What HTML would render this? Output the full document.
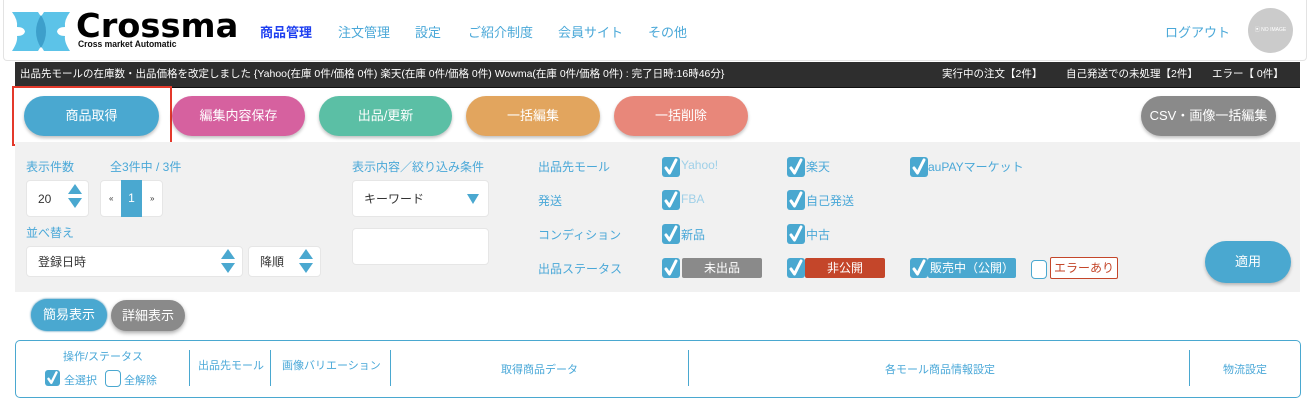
<!DOCTYPE html>
<html><head><meta charset="utf-8"><style>
*{box-sizing:border-box;margin:0;padding:0}
body{width:1307px;height:404px;overflow:hidden;background:#fff;font-family:"Liberation Sans","Noto Sans CJK JP",sans-serif;position:relative}
.a{position:absolute}
.nav{position:absolute;top:22px;font-size:13px;color:#4aa8d8}
.btn{position:absolute;top:96px;height:40px;border-radius:20px;color:#fff;font-size:13px;text-align:center;line-height:40px;box-shadow:0 2px 3px rgba(0,0,0,.25)}
.lbl{position:absolute;font-size:12px;color:#4aa8d8}
.box{position:absolute;background:#fff;border-radius:4px;border:1px solid #e6e6e6;font-size:12px;color:#333}
.up{position:absolute;width:0;height:0;border-left:7px solid transparent;border-right:7px solid transparent;border-bottom:10px solid #4aa8d0}
.dn{position:absolute;width:0;height:0;border-left:7px solid transparent;border-right:7px solid transparent;border-top:10px solid #4aa8d0}
.cb{position:absolute;width:18px;height:20px;background:#4aa8d0;border-radius:3px}
.cb svg{position:absolute;left:0;top:0;width:100%;height:100%}
.ct{position:absolute;font-size:12px;color:#4aa8d8}
.bd{position:absolute;height:20px;color:#fff;font-size:12px;line-height:20px;text-align:center;border-radius:2px}
.th{position:absolute;font-size:11px;color:#4aa8d8}
.sep{position:absolute;top:350px;width:1px;height:36px;background:#4aa8d0}
</style></head><body>
<svg width="0" height="0" style="position:absolute"><defs><symbol id="ck" viewBox="0 0 18 20"><path d="M4 11 L7.5 16 L14 3" stroke="#fff" stroke-width="3" fill="none" stroke-linecap="round" stroke-linejoin="round"/></symbol></defs></svg>
<div class="a" style="left:3px;top:0;width:1304px;height:61px;border:1px solid #e3e3e3;border-top:none;border-radius:0 0 4px 4px"></div>
<svg class="a" style="left:12px;top:10px" width="60" height="43" viewBox="0 0 60 43">
<path d="M0 2 L26 2 Q40 21 26 41 L0 41 Q6 32 5 26 Q12 26 13 21.5 Q12 17 5 17 Q6 10 0 2Z" fill="#5cc3e8"/>
<path d="M58 2 L32 2 Q18 21 32 41 L58 41 Q52 32 53 26 Q46 26 45 21.5 Q46 17 53 17 Q52 10 58 2Z" fill="#5cc3e8"/>
<path d="M29 5 Q19 21.5 29 38 Q39 21.5 29 5Z" fill="#3d9fcb"/>
</svg>
<div class="a" style="left:76px;top:6px;font-size:33px;font-weight:900;color:#000;letter-spacing:0px;font-family:'DejaVu Sans','Liberation Sans',sans-serif;transform:scaleX(1.02);transform-origin:left">Crossma</div>
<div class="a" style="left:78px;top:39px;font-size:9px;font-weight:bold;color:#111;transform:scaleX(.95);transform-origin:left">Cross market Automatic</div>
<div class="nav" style="left:260px;color:#1e3ff0;font-weight:bold">商品管理</div>
<div class="nav" style="left:338px">注文管理</div>
<div class="nav" style="left:415px">設定</div>
<div class="nav" style="left:468px">ご紹介制度</div>
<div class="nav" style="left:558px">会員サイト</div>
<div class="nav" style="left:648px">その他</div>
<div class="nav" style="left:1165px">ログアウト</div>
<div class="a" style="left:1248px;top:8px;width:45px;height:45px;border-radius:50%;background:#cbcbcb;color:#fff;font-size:5px;line-height:45px;text-align:center">▣ NO IMAGE</div>
<div class="a" style="left:15px;top:62px;width:1285px;height:26px;background:#2e2e2e;color:#fff;font-size:10.5px;line-height:25px;padding-left:5px;border-bottom:1px solid #111">出品先モールの在庫数・出品価格を改定しました {Yahoo(在庫 0件/価格 0件) 楽天(在庫 0件/価格 0件) Wowma(在庫 0件/価格 0件) : 完了日時:16時46分}
<span class="a" style="left:927px;top:0">実行中の注文【2件】</span><span class="a" style="left:1051px;top:0">自己発送での未処理【2件】</span><span class="a" style="left:1197px;top:0">エラー【 0件】</span></div>
<div class="a" style="left:12px;top:86px;width:160px;height:60px;border:2px solid #e4392b"></div>
<div class="btn" style="left:24px;width:135px;background:#4aa8d0">商品取得</div>
<div class="btn" style="left:172px;width:133px;background:#d6619f">編集内容保存</div>
<div class="btn" style="left:319px;width:133px;background:#5bbfa5">出品/更新</div>
<div class="btn" style="left:466px;width:134px;background:#e2a55e">一括編集</div>
<div class="btn" style="left:614px;width:134px;background:#e8877a">一括削除</div>
<div class="btn" style="left:1141px;width:135px;background:#8a8a8a">CSV・画像一括編集</div>
<div class="a" style="left:15px;top:142px;width:1285px;height:150px;background:#f1f1f1"></div>
<div class="lbl" style="left:26px;top:158px">表示件数</div>
<div class="lbl" style="left:110px;top:158px">全3件中 / 3件</div>
<div class="box" style="left:26px;top:180px;width:63px;height:37px;line-height:36px;padding-left:11px">20</div>
<div class="up" style="left:68px;top:184px"></div><div class="dn" style="left:68px;top:198px"></div>
<div class="box" style="left:100px;top:180px;width:63px;height:37px;font-size:8px;line-height:36px"><span class="a" style="left:8px">«</span><span class="a" style="left:20px;top:-1px;width:21px;height:37px;background:#4aa8d0;color:#fff;font-size:12px;text-align:center">1</span><span class="a" style="left:49px">»</span></div>
<div class="lbl" style="left:26px;top:224px">並べ替え</div>
<div class="box" style="left:26px;top:246px;width:217px;height:31px;line-height:30px;padding-left:11px">登録日時</div>
<div class="up" style="left:221px;top:249px"></div><div class="dn" style="left:221px;top:263px"></div>
<div class="box" style="left:248px;top:246px;width:73px;height:31px;line-height:30px;padding-left:11px">降順</div>
<div class="up" style="left:299px;top:249px"></div><div class="dn" style="left:299px;top:263px"></div>
<div class="lbl" style="left:352px;top:158px">表示内容／絞り込み条件</div>
<div class="box" style="left:352px;top:180px;width:137px;height:37px;line-height:36px;padding-left:11px">キーワード</div>
<div class="dn" style="left:467px;top:194px;border-left-width:6px;border-right-width:6px"></div>
<div class="box" style="left:352px;top:228px;width:137px;height:37px"></div>
<div class="lbl" style="left:538px;top:158px">出品先モール</div>
<div class="lbl" style="left:538px;top:192px">発送</div>
<div class="lbl" style="left:538px;top:226px">コンディション</div>
<div class="lbl" style="left:538px;top:260px">出品ステータス</div>
<div class="cb" style="left:662px;top:157px"><svg><use href="#ck"/></svg></div><div class="ct" style="left:681px;top:158px;color:#9fd0e8">Yahoo!</div>
<div class="cb" style="left:787px;top:157px"><svg><use href="#ck"/></svg></div><div class="ct" style="left:806px;top:158px">楽天</div>
<div class="cb" style="left:910px;top:157px"><svg><use href="#ck"/></svg></div><div class="ct" style="left:928px;top:158px">auPAYマーケット</div>
<div class="cb" style="left:662px;top:190px"><svg><use href="#ck"/></svg></div><div class="ct" style="left:681px;top:192px;color:#9fd0e8">FBA</div>
<div class="cb" style="left:787px;top:190px"><svg><use href="#ck"/></svg></div><div class="ct" style="left:806px;top:192px">自己発送</div>
<div class="cb" style="left:662px;top:224px"><svg><use href="#ck"/></svg></div><div class="ct" style="left:681px;top:226px">新品</div>
<div class="cb" style="left:787px;top:224px"><svg><use href="#ck"/></svg></div><div class="ct" style="left:806px;top:226px">中古</div>
<div class="cb" style="left:662px;top:258px"><svg><use href="#ck"/></svg></div><div class="bd" style="left:682px;top:258px;width:80px;background:#8a8a8a">未出品</div>
<div class="cb" style="left:787px;top:258px"><svg><use href="#ck"/></svg></div><div class="bd" style="left:805px;top:258px;width:80px;background:#c4462a">非公開</div>
<div class="cb" style="left:910px;top:258px"><svg><use href="#ck"/></svg></div><div class="bd" style="left:928px;top:258px;width:88px;background:#4aa8d0">販売中（公開）</div>
<div class="a" style="left:1031px;top:260px;width:16px;height:19px;border:1px solid #4aa8d0;border-radius:4px;background:#fff"></div>
<div class="bd" style="left:1050px;top:257px;width:68px;height:22px;background:#fff;border:1px solid #c4462a;color:#c4462a">エラーあり</div>
<div class="btn" style="left:1205px;top:241px;width:86px;height:42px;line-height:42px;border-radius:21px;background:#4aa8d0">適用</div>
<div class="btn" style="left:31px;top:299px;width:76px;height:32px;line-height:32px;border-radius:16px;background:#4aa8d0;box-shadow:0 0 2px #2c7fa6">簡易表示</div>
<div class="btn" style="left:111px;top:300px;width:74px;height:31px;line-height:31px;border-radius:16px;background:#8a8a8a;box-shadow:0 2px 4px rgba(0,0,0,.35)">詳細表示</div>
<div class="a" style="left:15px;top:340px;width:1286px;height:58px;border:1px solid #4aa8d0;border-radius:5px"></div>
<div class="th" style="left:63px;top:348px">操作/ステータス</div>
<div class="cb" style="left:45px;top:370px;width:15px;height:16px"><svg><use href="#ck"/></svg></div><div class="th" style="left:64px;top:372px">全選択</div>
<div class="a" style="left:105px;top:370px;width:16px;height:17px;border:1px solid #4aa8d0;border-radius:4px"></div><div class="th" style="left:124px;top:372px">全解除</div>
<div class="sep" style="left:189px"></div><div class="th" style="left:198px;top:357px">出品先モール</div>
<div class="sep" style="left:270px"></div><div class="th" style="left:282px;top:357px">画像バリエーション</div>
<div class="sep" style="left:390px"></div><div class="th" style="left:501px;top:361px">取得商品データ</div>
<div class="sep" style="left:688px"></div><div class="th" style="left:885px;top:361px">各モール商品情報設定</div>
<div class="sep" style="left:1189px"></div><div class="th" style="left:1223px;top:361px">物流設定</div>
</body></html>
